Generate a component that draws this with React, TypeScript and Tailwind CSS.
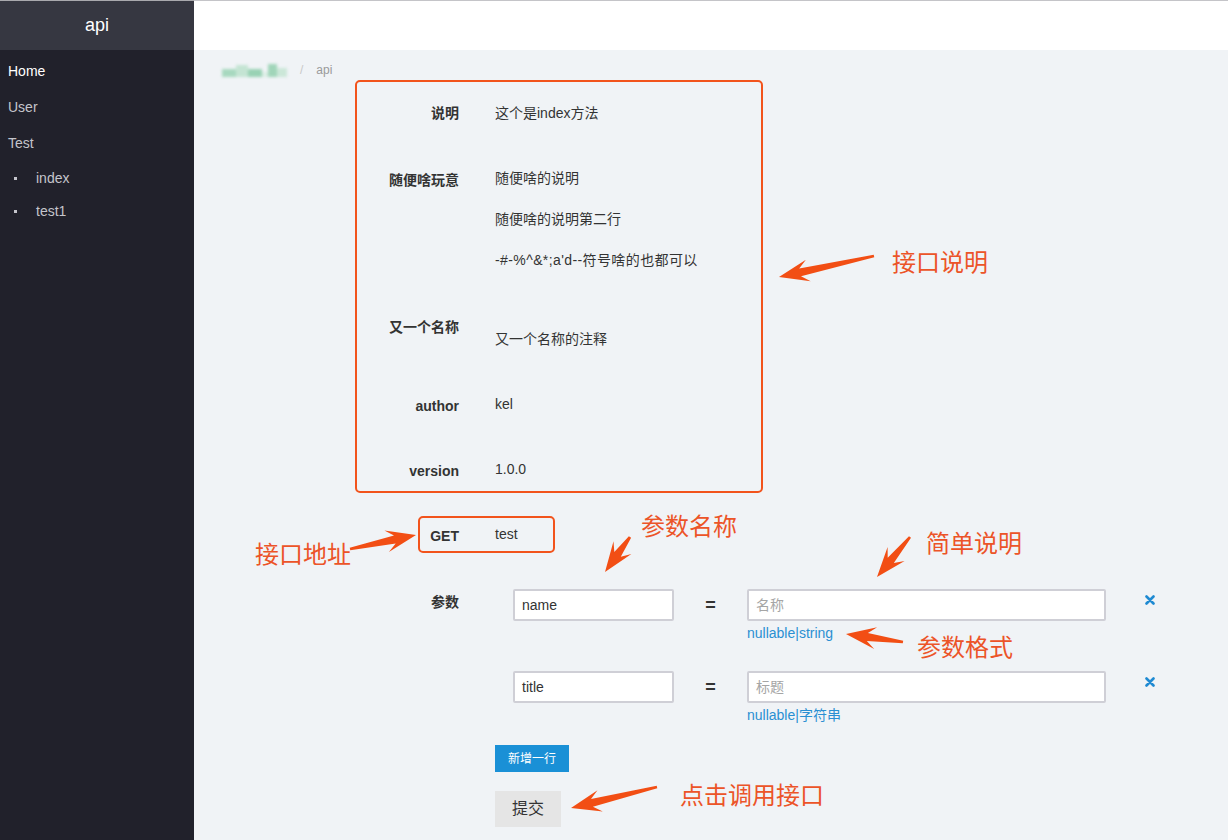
import React from 'react';

const ui = { fontFamily: '"Liberation Sans", "Noto Sans CJK SC", sans-serif' };
const note = { fontFamily: '"Noto Sans CJK SC", "Liberation Sans", sans-serif' };

type Pt = [number, number];

// tapered annotation arrow, tail -> tip
function arrowPoints(tail: Pt, tip: Pt) {
  const dx = tip[0] - tail[0];
  const dy = tip[1] - tail[1];
  const len = Math.hypot(dx, dy);
  const ux = dx / len;
  const uy = dy / len;
  const nx = -uy;
  const ny = ux;
  const L = 30;
  const W = 11;
  const neck = 4;
  const t = 1.3;
  const at = (base: Pt, back: number, side: number): string =>
    `${(base[0] - ux * back + nx * side).toFixed(1)},${(base[1] - uy * back + ny * side).toFixed(1)}`;
  return [
    at(tail, 0, t),
    at(tip, L * 0.72, neck),
    at(tip, L, W),
    at(tip, 0, 0),
    at(tip, L, -W),
    at(tip, L * 0.72, -neck),
    at(tail, 0, -t),
  ].join(' ');
}

const arrows: [Pt, Pt][] = [
  [[874, 256], [779, 277]],
  [[350, 549], [416, 535]],
  [[630, 537], [605, 572]],
  [[910, 537], [877, 577]],
  [[903, 642], [846, 634]],
  [[657, 787], [571, 808]],
];

function Row({ label, children, labelClass = '' }: { label: string; children: React.ReactNode; labelClass?: string }) {
  return (
    <div className="flex">
      <div className={`relative w-[104px] shrink-0 text-right text-[14px] font-bold leading-[26px] text-[#333] ${labelClass}`}>{label}</div>
      <div className="ml-[36px] text-[14px] leading-[26px] text-[#333]">{children}</div>
    </div>
  );
}

function CloseX() {
  return (
    <svg width="10" height="10" viewBox="0 0 10 10" className="mt-[6px] ml-[39px]">
      <path d="M1.5 1.5 L8.5 8.5 M8.5 1.5 L1.5 8.5" stroke="#1f8ad2" strokeWidth="2.6" strokeLinecap="round" />
    </svg>
  );
}

function ParamRow({ name, placeholder, hint }: { name: string; placeholder: string; hint: string }) {
  return (
    <div className="flex items-start pl-[18px]">
      <div className="flex h-[32px] w-[161px] items-center rounded-[2px] border-2 border-[#cfcfd6] bg-white px-[7px] text-[14px] text-[#333]">
        {name}
      </div>
      <div className="flex h-[32px] w-[73px] items-center justify-center text-[18px] font-bold text-[#333]">=</div>
      <div>
        <div className="flex h-[32px] w-[359px] items-center rounded-[2px] border-2 border-[#cfcfd6] bg-white px-[7px] text-[14px] text-[#a5a5a5]">
          {placeholder}
        </div>
        <div className="mt-[4px] text-[14px] leading-[16px] text-[#2a8fd2]">{hint}</div>
      </div>
      <CloseX />
    </div>
  );
}

export default function App() {
  return (
    <div className="relative h-[840px] w-[1228px] overflow-hidden bg-[#f0f3f6]" style={ui}>
      <div className="flex h-full">
        {/* sidebar */}
        <aside className="flex w-[194px] shrink-0 flex-col bg-[#21212b]">
          <div className="flex h-[50px] items-center justify-center border-t border-[#a9a9ad] bg-[#363741] text-[18px] text-white">api</div>
          <nav className="pt-[3px] text-[14px]">
            <div className="pl-[8px] leading-[36px] font-medium text-white">Home</div>
            <div className="pl-[8px] leading-[36px] text-[#c5c5cc]">User</div>
            <div className="pl-[8px] leading-[36px] text-[#c5c5cc]">Test</div>
            <div className="flex h-[34px] items-center text-[#c5c5cc]">
              <span className="ml-[14px] h-[3px] w-[3px] bg-[#c5c5cc]" />
              <span className="ml-[19px]">index</span>
            </div>
            <div className="flex h-[33px] items-center text-[#c5c5cc]">
              <span className="ml-[14px] h-[3px] w-[3px] bg-[#c5c5cc]" />
              <span className="ml-[19px]">test1</span>
            </div>
          </nav>
        </aside>

        {/* main */}
        <main className="flex-1">
          <div className="h-[50px] border-t border-[#c4c4c8] bg-white" />
          <div className="mt-[10px] flex h-[20px] items-center pl-[28px] text-[12px]">
            <div className="flex items-end opacity-75 blur-[1.5px]">
              <span className="h-[8px] w-[14px] bg-[#8fd0ad]" />
              <span className="h-[12px] w-[12px] bg-[#b6e0c8]" />
              <span className="h-[8px] w-[14px] bg-[#7cc79e]" />
              <span className="h-[5px] w-[6px] bg-[#d5ece0]" />
              <span className="h-[13px] w-[9px] bg-[#86cca5]" />
              <span className="h-[9px] w-[10px] bg-[#bfe3cf]" />
            </div>
            <span className="ml-[13px] text-[#c8c8c8]">/</span>
            <span className="ml-[13px] text-[#9a9a9a]">api</span>
          </div>

          <div className="mt-[20px] pl-[161px]">
            <div className="mb-[39px]">
              <Row label="说明">这个是index方法</Row>
            </div>
            <div className="mb-[41px]">
              <Row label="随便啥玩意" labelClass="top-[2px]">
                <div className="flex flex-col gap-[15px]">
                  <div>随便啥的说明</div>
                  <div>随便啥的说明第二行</div>
                  <div className="tracking-[0.4px]">-#-%^&amp;*;a'd--符号啥的也都可以</div>
                </div>
              </Row>
            </div>
            <div className="mb-[39px]">
              <Row label="又一个名称">
                <div className="mt-[12px]">又一个名称的注释</div>
              </Row>
            </div>
            <div className="mb-[39px]">
              <Row label="author" labelClass="top-[2px]">kel</Row>
            </div>
            <div className="mb-[39px]">
              <Row label="version" labelClass="top-[2px]">1.0.0</Row>
            </div>
            <div className="mb-[42px]">
              <Row label="GET" labelClass="top-[2px]">test</Row>
            </div>
            <div className="flex">
              <div className="w-[104px] shrink-0 text-right text-[14px] font-bold leading-[26px] text-[#333]">参数</div>
              <div className="ml-[36px]">
                <ParamRow name="name" placeholder="名称" hint="nullable|string" />
                <div className="mt-[30px]">
                  <ParamRow name="title" placeholder="标题" hint="nullable|字符串" />
                </div>
                <button className="mt-[22px] block h-[27px] bg-[#1a90d6] px-[13px] text-[12px] text-white">新增一行</button>
                <button className="mt-[19px] block h-[36px] bg-[#e5e5e5] px-[17px] text-[16px] text-[#333]">提交</button>
              </div>
            </div>
          </div>
        </main>
      </div>

      {/* annotations */}
      <div className="pointer-events-none absolute inset-0" style={note}>
        <div className="absolute left-[355px] top-[80px] h-[413px] w-[408px] rounded-[5px] border-[2.5px] border-[#f2531c]" />
        <div className="absolute left-[418px] top-[516px] h-[37px] w-[137px] rounded-[5px] border-[2.5px] border-[#f2531c]" />
        <svg className="absolute left-0 top-0" width="1228" height="840">
          {arrows.map(([a, b], i) => (
            <polygon key={i} points={arrowPoints(a, b)} fill="#f24e14" />
          ))}
        </svg>
        <div className="absolute left-[892px] top-[244px] text-[24px] leading-[34px] text-[#ec5428]">接口说明</div>
        <div className="absolute left-[255px] top-[536px] text-[24px] leading-[34px] text-[#ec5428]">接口地址</div>
        <div className="absolute left-[641px] top-[508px] text-[24px] leading-[34px] text-[#ec5428]">参数名称</div>
        <div className="absolute left-[926px] top-[525px] text-[24px] leading-[34px] text-[#ec5428]">简单说明</div>
        <div className="absolute left-[917px] top-[629px] text-[24px] leading-[34px] text-[#ec5428]">参数格式</div>
        <div className="absolute left-[680px] top-[777px] text-[24px] leading-[34px] text-[#ec5428]">点击调用接口</div>
      </div>
    </div>
  );
}
